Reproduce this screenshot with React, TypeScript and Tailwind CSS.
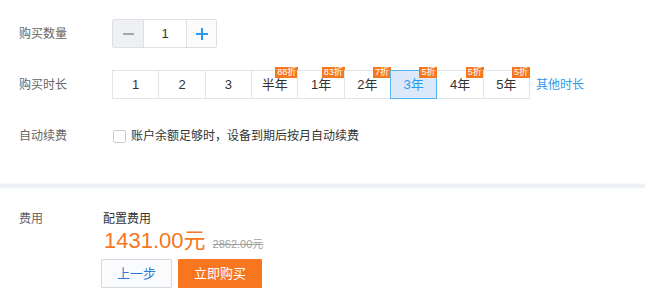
import React from "react";

type Opt = { t: string; badge?: string; sel?: boolean };
const opts: Opt[] = [
  { t: "1" },
  { t: "2" },
  { t: "3" },
  { t: "半年", badge: "88折" },
  { t: "1年", badge: "83折" },
  { t: "2年", badge: "7折" },
  { t: "3年", badge: "5折", sel: true },
  { t: "4年", badge: "5折" },
  { t: "5年", badge: "5折" },
];

export default function App() {
  return (
    <div className="w-[645px] h-[299px] bg-white overflow-hidden text-[12px] text-[#333] font-['Liberation_Sans','Noto_Sans_CJK_SC',sans-serif]">
      <div className="pl-[19px]">
        {/* quantity */}
        <div className="flex items-center pt-[19px]">
          <div className="w-[93px] text-[#666] text-[12px]">购买数量</div>
          <div className="flex h-[29px] border border-[#dcdfe4] rounded-[2px]">
            <div className="w-[31px] bg-[#eef0f3] border-r border-[#dcdfe4] flex items-center justify-center">
              <div className="w-[11px] h-[2px] bg-[#a3a8b0]" />
            </div>
            <div className="w-[42px] flex items-center justify-center text-[13px] text-[#333]">1</div>
            <div className="w-[30px] bg-[#fbfbfb] border-l border-[#dcdfe4] flex items-center justify-center relative">
              <div className="w-[12px] h-[2px] bg-[#2b9bf0]" />
              <div className="absolute w-[2px] h-[12px] bg-[#2b9bf0]" />
            </div>
          </div>
        </div>
        {/* duration */}
        <div className="flex items-center mt-[22px]">
          <div className="w-[93px] text-[#666] text-[12px]">购买时长</div>
          <div className="flex h-[29px]">
            {opts.map((o, i) => (
              <div
                key={i}
                className={
                  "relative w-[47.35px] h-[29px] flex items-center justify-center text-[13px] border " +
                  (o.sel
                    ? "bg-[#dbe9fa] border-[#5ab4f2] text-[#2b9bf0] z-10"
                    : "bg-white border-[#e1e4e8] text-[#333]") +
                  (i > 0 ? " -ml-px" : "")
                }
              >
                {o.t}
                {o.badge && (
                  <span className="absolute right-[-1px] top-[-4px] h-[11px] px-[2px] bg-[#f5781e] text-white text-[9px] leading-[11px]">
                    {o.badge}
                  </span>
                )}
              </div>
            ))}
          </div>
          <span className="ml-[6px] text-[12px] text-[#2b9bf0]">其他时长</span>
        </div>
        {/* auto renew */}
        <div className="flex items-center mt-[28px]">
          <div className="w-[94px] text-[#666] text-[12px]">自动续费</div>
          <div className="w-[13px] h-[13px] border border-[#c8ccd2] rounded-[2px] bg-white" />
          <span className="ml-[5px] text-[12px] text-[#333]">账户余额足够时，设备到期后按月自动续费</span>
        </div>
      </div>
      {/* divider */}
      <div className="mt-[38px] h-[6px] bg-gradient-to-b from-[#f9fafb] via-[#e8ecf0] to-[#fbfcfd]" />
      {/* cost */}
      <div className="flex pl-[19px] pt-[22px]">
        <div className="w-[84px] text-[#666] text-[12px] leading-[16px]">费用</div>
        <div className="flex flex-col">
          <div className="text-[12px] leading-[16px] text-[#333]">配置费用</div>
          <div className="flex items-end mt-[2px] h-[24px]">
            <span className="ml-[1px] text-[#f57722] text-[22px] leading-[24px]">1431.00元</span>
            <span className="ml-[7px] mb-[3px] text-[11px] leading-[12px] text-[#a0a0a0] line-through">2862.00元</span>
          </div>
          <div className="flex mt-[6px] -ml-[2px]">
            <button className="w-[71px] h-[29px] border border-[#d6dae0] bg-[#fafbfc] text-[#2d7bd6] text-[13px] rounded-[1px]">
              上一步
            </button>
            <button className="ml-[6px] w-[84px] h-[29px] bg-[#f7761f] text-white text-[13px] rounded-[1px]">
              立即购买
            </button>
          </div>
        </div>
      </div>
    </div>
  );
}
